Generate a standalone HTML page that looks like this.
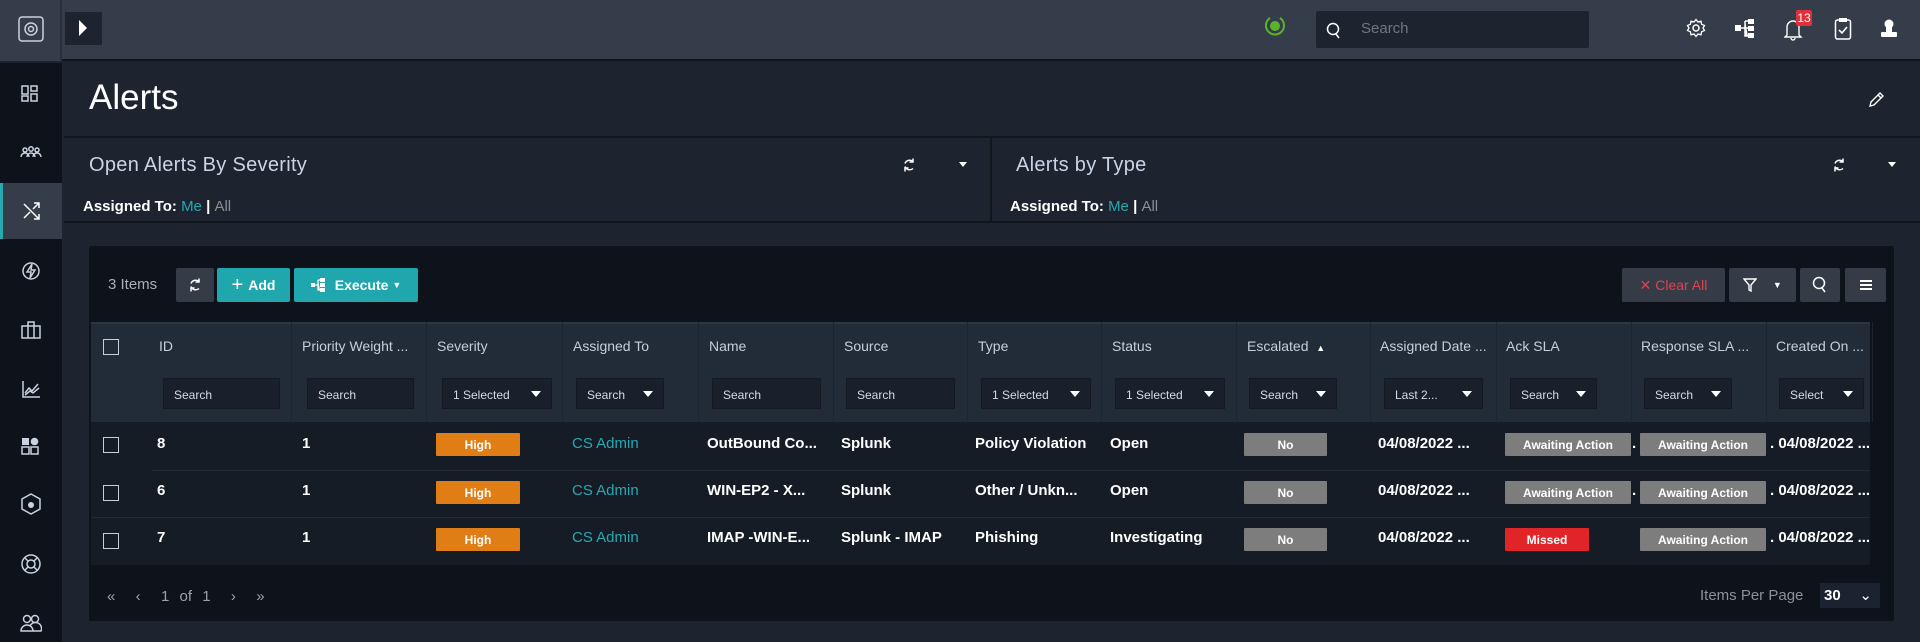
<!DOCTYPE html>
<html><head><meta charset="utf-8"><style>
*{margin:0;padding:0;box-sizing:border-box}
body{width:1920px;height:642px;overflow:hidden;background:#1e2330;font-family:"Liberation Sans",sans-serif;color:#fff;position:relative}
.a{position:absolute}
.top{left:0;top:0;width:1920px;height:61px;background:#353c4a;border-bottom:2px solid #10141b}
.side{left:0;top:63px;width:62px;height:579px;background:#0e121a}
.ic{stroke:#c8d2e0;fill:none;stroke-width:1.5}
.w{font-size:20px;color:#c9d5e6;letter-spacing:.3px}
.asg{font-size:15px;font-weight:bold;color:#fff}
.asg .me{color:#27a9b0;font-weight:normal}.asg .al{color:#8a8f98;font-weight:normal}
.btn{position:absolute;top:268px;height:34px;border-radius:2px;font-size:14px;font-weight:bold;display:flex;align-items:center;justify-content:center}
.th{position:absolute;top:338px;font-size:14px;color:#c5cfdc;white-space:nowrap}
.fi{position:absolute;top:378px;height:31px;background:#1a202b;border:1px solid #151a22;font-size:12px;color:#d5dbe4;padding:9px 10px;white-space:nowrap}
.fi i{position:absolute;right:10px;top:12px;border-left:5px solid transparent;border-right:5px solid transparent;border-top:6px solid #fff}
.cd{position:absolute;top:322px;height:100px;width:1px;background:#1c2430}
.cb{position:absolute;left:103px;width:16px;height:16px;border:1.5px solid #c8ced8}
.td{position:absolute;font-size:15px;font-weight:bold;white-space:nowrap}
.bd{position:absolute;height:23px;font-size:12px;font-weight:bold;display:flex;align-items:center;justify-content:center;border-radius:1px}
.hi{background:#e07d15;width:84px;left:436px}
.no{background:#7d7d7d;width:83px;left:1244px}
.aw{background:#7d7d7d;width:126px}
.mi{background:#e02428;width:84px;left:1505px}
</style></head><body>
<svg width="0" height="0" style="position:absolute"><defs><g id="rf"><path d="M11 4.5A5 5 0 0 0 3 6.5M3 9.5A5 5 0 0 0 11 11.5" stroke="#fff" stroke-width="1.5" fill="none"/><path d="M11 1.5v3.5H7.5M3 14.5V11h3.5" stroke="#fff" stroke-width="1.5" fill="none"/></g></defs></svg>
<div class="a top"></div>
<div class="a" style="left:0;top:0;width:62px;height:61px;background:#353c4a;border-right:2px solid #2a303b"></div>
<svg class="a" style="left:18px;top:16px" width="26" height="26" viewBox="0 0 26 26"><rect x="1" y="1" width="24" height="24" rx="3" class="ic"/><circle cx="13" cy="13" r="6" class="ic"/><circle cx="13" cy="13" r="2.5" class="ic"/></svg>
<div class="a" style="left:65px;top:12px;width:37px;height:33px;background:#1e2330"></div>
<div class="a" style="left:79px;top:20px;border-top:8px solid transparent;border-bottom:8px solid transparent;border-left:8px solid #fff"></div>
<svg class="a" style="left:1264px;top:14px" width="22" height="24" viewBox="0 0 22 24"><path d="M6 4A9 9 0 1 0 16 4" stroke="#5bb32a" stroke-width="2" fill="none"/><circle cx="11" cy="12" r="5" fill="#5bb32a"/></svg>
<div class="a" style="left:1316px;top:11px;width:273px;height:37px;background:#1e2330;border-radius:2px"></div>
<svg class="a" style="left:1326px;top:22px" width="16" height="18" viewBox="0 0 16 18"><circle cx="7" cy="7" r="5.5" fill="none" stroke="#fff" stroke-width="1.5"/><path d="M10 12l3 4" stroke="#fff" stroke-width="1.5"/></svg>
<div class="a" style="left:1361px;top:20px;font-size:15px;color:#6f7683">Search</div>
<svg class="a" style="left:1686px;top:18px" width="20" height="20" viewBox="0 0 20 20"><circle cx="10" cy="10" r="3" stroke="#fff" fill="none" stroke-width="1.5"/><path d="M10 1.5l2 2.5 3-.8.6 3 2.9 1.3-1.5 2.5 1.5 2.5-2.9 1.3-.6 3-3-.8-2 2.5-2-2.5-3 .8-.6-3L1.5 12.5 3 10 1.5 7.5l2.9-1.3.6-3 3 .8z" stroke="#fff" fill="none" stroke-width="1.3"/></svg>
<svg class="a" style="left:1735px;top:18px" width="20" height="20" viewBox="0 0 20 20" fill="#fff"><rect x="0" y="7" width="6" height="6"/><rect x="13" y="1" width="6" height="5"/><rect x="13" y="8" width="6" height="5"/><rect x="13" y="15" width="6" height="5"/><path d="M6 10h4M10 3v15h3M10 3h3M10 10h3" stroke="#fff" stroke-width="1.5"/></svg>
<svg class="a" style="left:1784px;top:18px" width="20" height="24" viewBox="0 0 20 24"><path d="M3 17V9a6 6 0 0 1 12 0v8l2 2H1z M7 20a2 2 0 0 0 4 0" stroke="#fff" fill="none" stroke-width="1.4"/></svg>
<div class="a" style="left:1796px;top:10px;width:16px;height:16px;background:#e0303a;border-radius:2px;font-size:12px;text-align:center;line-height:16px">13</div>
<svg class="a" style="left:1834px;top:17px" width="18" height="24" viewBox="0 0 18 24"><rect x="1.5" y="3" width="15" height="19" rx="2" fill="none" stroke="#fff" stroke-width="1.5"/><rect x="5" y="1" width="8" height="4" fill="#fff"/><path d="M5 13l3 3 5-6" stroke="#fff" stroke-width="1.6" fill="none"/></svg>
<svg class="a" style="left:1879px;top:18px" width="20" height="20" viewBox="0 0 20 20" fill="#fff"><circle cx="10" cy="6" r="4.5"/><rect x="7" y="9" width="6" height="6"/><rect x="2" y="14" width="16" height="5" rx="1"/></svg>

<div class="a side"></div>
<div class="a" style="left:0;top:183px;width:62px;height:56px;background:#353c4a;border-left:3px solid #27a9b0"></div>
<svg class="a" style="left:20px;top:84px" width="20" height="20" viewBox="0 0 20 20"><rect x="2" y="2" width="6" height="8" class="ic"/><rect x="11" y="2" width="6" height="5" class="ic"/><rect x="2" y="12" width="6" height="5" class="ic"/><rect x="11" y="10" width="6" height="7" class="ic"/></svg>
<svg class="a" style="left:20px;top:145px" width="22" height="16" viewBox="0 0 22 16"><circle cx="5" cy="5" r="2" class="ic"/><circle cx="11" cy="4" r="2.2" class="ic"/><circle cx="17" cy="5" r="2" class="ic"/><path d="M1 12a4 4 0 0 1 8 0M7 12a4 4 0 0 1 8 0M13 12a4 4 0 0 1 8 0" class="ic"/></svg>
<svg class="a" style="left:22px;top:201px" width="20" height="20" viewBox="0 0 20 20"><path d="M2 3l15 15M12 18h5v-5M2 17L8 11M11 8l6-6M12 2h5v5" stroke="#fff" stroke-width="1.5" fill="none"/></svg>
<svg class="a" style="left:21px;top:261px" width="20" height="20" viewBox="0 0 20 20"><circle cx="10" cy="10" r="8" class="ic"/><path d="M11 3l-5 8h4l-1 6 5-8h-4z" class="ic"/></svg>
<svg class="a" style="left:20px;top:320px" width="22" height="20" viewBox="0 0 22 20"><rect x="2" y="6" width="18" height="12" class="ic"/><path d="M8 6V2h6v4M8 6v12M14 6v12" class="ic"/></svg>
<svg class="a" style="left:21px;top:380px" width="20" height="18" viewBox="0 0 20 18"><path d="M2 1v16h17M4 13l4-5 3 3 6-7M4 15l5-4 3 2 6-5" class="ic"/></svg>
<svg class="a" style="left:20px;top:436px" width="20" height="20" viewBox="0 0 20 20"><rect x="2" y="2" width="7" height="7" fill="#c8d2e0"/><circle cx="14.5" cy="5.5" r="3.8" fill="#c8d2e0"/><rect x="2" y="11" width="7" height="7" class="ic"/><rect x="11" y="11" width="7" height="7" class="ic"/></svg>
<svg class="a" style="left:20px;top:493px" width="22" height="22" viewBox="0 0 22 22"><path d="M11 1l9 5v10l-9 5-9-5V6z" class="ic"/><circle cx="11" cy="12" r="3" fill="#c8d2e0"/></svg>
<svg class="a" style="left:20px;top:553px" width="22" height="22" viewBox="0 0 22 22"><circle cx="11" cy="11" r="9" class="ic"/><circle cx="11" cy="11" r="4" class="ic"/><path d="M5 5l3 3M17 5l-3 3M5 17l3-3M17 17l-3-3" class="ic"/></svg>
<svg class="a" style="left:20px;top:613px" width="22" height="20" viewBox="0 0 22 20"><circle cx="7" cy="6" r="3.5" class="ic"/><circle cx="15" cy="6" r="3.5" class="ic"/><path d="M1 18a6 6 0 0 1 12 0zM10 13a6 6 0 0 1 11 5h-8" class="ic"/></svg>

<div class="a" style="left:89px;top:78px;font-size:35px;color:#fff">Alerts</div>
<svg class="a" style="left:1868px;top:90px" width="16" height="18" viewBox="0 0 16 18"><path d="M2 16l1-4 9-9 3 3-9 9z M10 5l3 3" stroke="#fff" stroke-width="1.4" fill="none"/></svg>
<div class="a" style="left:64px;top:136px;width:1856px;height:2px;background:#11151c"></div>
<div class="a w" style="left:89px;top:154px">Open Alerts By Severity</div>
<div class="a w" style="left:1016px;top:154px">Alerts by Type</div>
<div class="a asg" style="left:83px;top:198px">Assigned To: <span class="me">Me</span> | <span class="al">All</span></div>
<div class="a asg" style="left:1010px;top:198px">Assigned To: <span class="me">Me</span> | <span class="al">All</span></div>
<svg class="a" style="left:902px;top:157px" width="14" height="16" viewBox="0 0 14 16"><use href="#rf"/></svg>
<div class="a" style="left:959px;top:162px;border-left:4px solid transparent;border-right:4px solid transparent;border-top:5px solid #fff"></div>
<svg class="a" style="left:1832px;top:157px" width="14" height="16" viewBox="0 0 14 16"><use href="#rf"/></svg>
<div class="a" style="left:1888px;top:162px;border-left:4px solid transparent;border-right:4px solid transparent;border-top:5px solid #fff"></div>
<div class="a" style="left:990px;top:138px;width:2px;height:84px;background:#11151c"></div>
<div class="a" style="left:64px;top:221px;width:1856px;height:2px;background:#11151c"></div>

<div class="a" style="left:89px;top:246px;width:1805px;height:375px;background:#0e121a;border-radius:2px"></div>
<div class="a" style="left:108px;top:276px;font-size:15px;color:#a8b0bc">3 Items</div>
<div class="btn" style="left:176px;width:38px;background:#353c48"><svg width="14" height="16" viewBox="0 0 14 16"><use href="#rf"/></svg></div>
<div class="btn" style="left:217px;width:73px;background:#20a7ae"><span style="font-size:20px;font-weight:normal;margin-right:5px">+</span>Add</div>
<div class="btn" style="left:294px;width:124px;background:#20a7ae"><svg width="16" height="14" viewBox="0 0 16 14" fill="#fff" style="margin-right:8px"><rect x="0" y="5" width="4" height="4"/><rect x="9" y="0" width="5" height="4"/><rect x="9" y="5" width="5" height="4"/><rect x="9" y="10" width="5" height="4"/><path d="M4 7h3M7 2v10h2M7 2h2" stroke="#fff" stroke-width="1.2"/></svg>Execute&nbsp; <span style="font-size:9px">▼</span></div>
<div class="btn" style="left:1622px;width:103px;background:#353c48;color:#e0424a;font-weight:normal">✕ Clear All</div>
<div class="btn" style="left:1729px;width:67px;background:#353c48;font-weight:normal"><svg width="14" height="16" viewBox="0 0 14 16"><path d="M1 2h12L8 8v6L6 13V8z" stroke="#fff" stroke-width="1.4" fill="none"/></svg>&nbsp;&nbsp;&nbsp;&nbsp;<span style="font-size:9px">▼</span></div>
<div class="btn" style="left:1800px;width:40px;background:#353c48"><svg width="16" height="18" viewBox="0 0 16 18"><circle cx="7" cy="7" r="5.5" fill="none" stroke="#fff" stroke-width="1.5"/><path d="M10 12l3 4" stroke="#fff" stroke-width="1.5"/></svg></div>
<div class="btn" style="left:1845px;width:41px;background:#353c48"><svg width="12" height="10" viewBox="0 0 12 10" fill="#fff"><rect y="0" width="12" height="2"/><rect y="4" width="12" height="2"/><rect y="8" width="12" height="2"/></svg></div>

<div class="a" style="left:91px;top:322px;width:1779px;height:100px;background:#222b38;border-top:2px solid #2c3542"></div>
<div class="cd" style="left:291px"></div><div class="cd" style="left:426px"></div><div class="cd" style="left:562px"></div><div class="cd" style="left:698px"></div><div class="cd" style="left:833px"></div><div class="cd" style="left:967px"></div><div class="cd" style="left:1101px"></div><div class="cd" style="left:1236px"></div><div class="cd" style="left:1370px"></div><div class="cd" style="left:1496px"></div><div class="cd" style="left:1631px"></div><div class="cd" style="left:1766px"></div><div class="cd" style="left:1872px"></div>
<div class="cb" style="top:339px"></div>
<div class="th" style="left:159px">ID</div>
<div class="th" style="left:302px">Priority Weight ...</div>
<div class="th" style="left:437px">Severity</div>
<div class="th" style="left:573px">Assigned To</div>
<div class="th" style="left:709px">Name</div>
<div class="th" style="left:844px">Source</div>
<div class="th" style="left:978px">Type</div>
<div class="th" style="left:1112px">Status</div>
<div class="th" style="left:1247px">Escalated &nbsp;<span style="font-size:9px;color:#fff">▲</span></div>
<div class="th" style="left:1380px">Assigned Date ...</div>
<div class="th" style="left:1506px">Ack SLA</div>
<div class="th" style="left:1641px">Response SLA ...</div>
<div class="th" style="left:1776px">Created On ...</div>
<div class="fi" style="left:163px;width:117px">Search</div>
<div class="fi" style="left:307px;width:107px">Search</div>
<div class="fi" style="left:442px;width:110px">1 Selected<i></i></div>
<div class="fi" style="left:576px;width:88px">Search<i></i></div>
<div class="fi" style="left:712px;width:109px">Search</div>
<div class="fi" style="left:846px;width:109px">Search</div>
<div class="fi" style="left:981px;width:110px">1 Selected<i></i></div>
<div class="fi" style="left:1115px;width:110px">1 Selected<i></i></div>
<div class="fi" style="left:1249px;width:88px">Search<i></i></div>
<div class="fi" style="left:1384px;width:99px">Last 2...<i></i></div>
<div class="fi" style="left:1510px;width:87px">Search<i></i></div>
<div class="fi" style="left:1644px;width:88px">Search<i></i></div>
<div class="fi" style="left:1779px;width:85px">Select<i></i></div>

<div class="a" style="left:91px;top:422px;width:1779px;height:143px;background:#161c26"></div>
<div class="a" style="left:151px;top:470px;width:1719px;height:1px;background:#222a36"></div>
<div class="a" style="left:91px;top:517px;width:1779px;height:1px;background:#222a36"></div>

<div class="cb" style="top:437px"></div><div class="cb" style="top:485px"></div><div class="cb" style="top:533px"></div>
<div class="td" style="left:157px;top:435px">8</div><div class="td" style="left:157px;top:482px">6</div><div class="td" style="left:157px;top:529px">7</div>
<div class="td" style="left:302px;top:435px">1</div><div class="td" style="left:302px;top:482px">1</div><div class="td" style="left:302px;top:529px">1</div>
<div class="bd hi" style="top:433px">High</div><div class="bd hi" style="top:481px">High</div><div class="bd hi" style="top:528px">High</div>
<div class="td" style="left:572px;top:435px;color:#27a9b0;font-weight:normal">CS Admin</div><div class="td" style="left:572px;top:482px;color:#27a9b0;font-weight:normal">CS Admin</div><div class="td" style="left:572px;top:529px;color:#27a9b0;font-weight:normal">CS Admin</div>
<div class="td" style="left:707px;top:435px">OutBound Co...</div><div class="td" style="left:707px;top:482px">WIN-EP2 - X...</div><div class="td" style="left:707px;top:529px">IMAP -WIN-E...</div>
<div class="td" style="left:841px;top:435px">Splunk</div><div class="td" style="left:841px;top:482px">Splunk</div><div class="td" style="left:841px;top:529px">Splunk - IMAP</div>
<div class="td" style="left:975px;top:435px">Policy Violation</div><div class="td" style="left:975px;top:482px">Other / Unkn...</div><div class="td" style="left:975px;top:529px">Phishing</div>
<div class="td" style="left:1110px;top:435px">Open</div><div class="td" style="left:1110px;top:482px">Open</div><div class="td" style="left:1110px;top:529px">Investigating</div>
<div class="bd no" style="top:433px">No</div><div class="bd no" style="top:481px">No</div><div class="bd no" style="top:528px">No</div>
<div class="td" style="left:1378px;top:435px">04/08/2022 ...</div><div class="td" style="left:1378px;top:482px">04/08/2022 ...</div><div class="td" style="left:1378px;top:529px">04/08/2022 ...</div>
<div class="bd aw" style="left:1505px;top:433px">Awaiting Action</div><div class="bd aw" style="left:1505px;top:481px">Awaiting Action</div><div class="bd mi" style="top:528px">Missed</div>
<div class="bd aw" style="left:1640px;top:433px">Awaiting Action</div><div class="bd aw" style="left:1640px;top:481px">Awaiting Action</div><div class="bd aw" style="left:1640px;top:528px">Awaiting Action</div>
<div class="td" style="left:1770px;top:435px">. 04/08/2022 ...</div><div class="td" style="left:1770px;top:482px">. 04/08/2022 ...</div><div class="td" style="left:1770px;top:529px">. 04/08/2022 ...</div>
<div class="td" style="left:1632px;top:435px">.</div><div class="td" style="left:1632px;top:482px">.</div>

<div class="a" style="left:107px;top:588px;font-size:15px;color:#9aa2ae;word-spacing:6px">« &nbsp;‹ &nbsp;1 of 1 &nbsp;› &nbsp;»</div>
<div class="a" style="left:1700px;top:587px;font-size:15px;color:#8a919c">Items Per Page</div>
<div class="a" style="left:1820px;top:583px;width:60px;height:25px;background:#1c2330;font-size:15px;font-weight:bold;padding:4px 4px">30 <span style="position:absolute;right:8px;top:3px;font-weight:normal">⌄</span></div>
</body></html>
